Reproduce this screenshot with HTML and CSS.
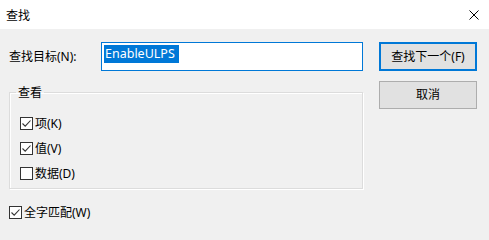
FILE: index.html
```html
<!DOCTYPE html>
<html lang="zh-CN">
<head>
<meta charset="utf-8">
<title>查找</title>
<link rel="stylesheet" href="styles.css">
</head>
<body>
<div class="window">
  <div class="titlebar">
    <span class="title">查找</span>
    <svg class="close" width="10" height="10" viewBox="0 0 10 10"><path d="M0.5 0.5 L9.5 9.5 M9.5 0.5 L0.5 9.5" stroke="#000" stroke-width="1" fill="none"/></svg>
  </div>
  <div class="content">
    <div class="left">
      <div class="find-row">
        <span class="label">查找目标(N):</span>
        <div class="textbox"><span class="sel">EnableULPS</span></div>
      </div>
      <fieldset class="group">
        <legend>查看</legend>
        <div class="checks">
          <div class="check"><span class="box"><svg width="11" height="11" viewBox="0 0 11 11"><path d="M1.5 5.5 L4.2 8.2 L9.5 2.5" stroke="#333" stroke-width="1.1" fill="none"/></svg></span><span>项(K)</span></div>
          <div class="check"><span class="box"><svg width="11" height="11" viewBox="0 0 11 11"><path d="M1.5 5.5 L4.2 8.2 L9.5 2.5" stroke="#333" stroke-width="1.1" fill="none"/></svg></span><span>值(V)</span></div>
          <div class="check"><span class="box"></span><span>数据(D)</span></div>
        </div>
      </fieldset>
      <div class="check whole"><span class="box"><svg width="11" height="11" viewBox="0 0 11 11"><path d="M1.5 5.5 L4.2 8.2 L9.5 2.5" stroke="#333" stroke-width="1.1" fill="none"/></svg></span><span>全字匹配(W)</span></div>
    </div>
    <div class="right">
      <div class="btn default">查找下一个(F)</div>
      <div class="btn cancel">取消</div>
    </div>
  </div>
</div>
</body>
</html>
```

FILE: styles.css
```css
html, body {
  margin: 0;
  padding: 0;
}
body {
  width: 489px;
  height: 226px;
  overflow: hidden;
  background: #f0f0f0;
  font-family: "Noto Sans", "Noto Sans CJK SC", sans-serif;
  font-size: 12px;
  line-height: 16px;
  color: #000;
}
.titlebar {
  height: 29px;
  background: #fff;
  display: flex;
  align-items: center;
  justify-content: space-between;
  padding-left: 6px;
  padding-right: 10px;
}
.title {
  font-family: "Noto Sans CJK SC", sans-serif;
}
.content {
  display: flex;
  padding: 13px 0 0 9px;
  gap: 16px;
}
.left {
  width: 354px;
  display: flex;
  flex-direction: column;
}
.find-row {
  display: flex;
  align-items: center;
  height: 29px;
}
.label {
  width: 92px;
}
.textbox {
  box-sizing: border-box;
  width: 262px;
  height: 29px;
  border: 1px solid #0078d7;
  background: #fff;
  padding: 2px 2px;
}
.sel {
  display: inline-block;
  height: 18px;
  line-height: 18px;
  padding: 0 4px 0 1px;
  background: #0078d7;
  color: #fff;
  font-size: 12.5px;
}
.group {
  box-sizing: border-box;
  width: 354px;
  margin: 13px 0 0 0;
  padding: 17px 0 8px 10px;
  border: 1px solid #dcdcdc;
  box-shadow: inset 1px 1px 0 #fff, 1px 1px 0 #fff;
  min-width: 0;
}
.group legend {
  padding: 0 2px;
  margin-left: -4px;
  line-height: 16px;
  font-family: "Noto Sans CJK SC", sans-serif;
}
.checks {
  display: flex;
  flex-direction: column;
  gap: 12px;
}
.check {
  display: flex;
  align-items: center;
  height: 13px;
  gap: 2px;
}
.box {
  box-sizing: border-box;
  width: 13px;
  height: 13px;
  border: 1px solid #333;
  background: #fff;
  display: flex;
}
.whole {
  margin-top: 17px;
}
.right {
  width: 98px;
  display: flex;
  flex-direction: column;
  gap: 10px;
}
.btn {
  box-sizing: border-box;
  background: #e1e1e1;
  border: 1px solid #adadad;
  display: flex;
  align-items: center;
  justify-content: center;
}
.default {
  height: 29px;
  border: 2px solid #0078d7;
}
.cancel {
  height: 28px;
}
```
